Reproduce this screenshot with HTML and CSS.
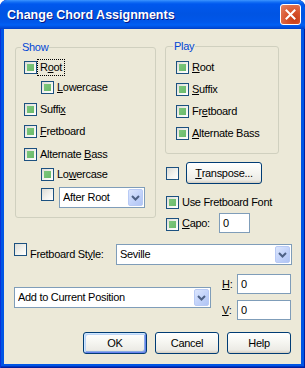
FILE: index.html
```
<!DOCTYPE html>
<html>
<head>
<meta charset="utf-8">
<link rel="stylesheet" href="styles.css">
</head>
<body>
<div class="window">
  <div class="titlebar">
    <span class="title">Change Chord Assignments</span>
    <span class="close"><svg width="11" height="11" viewBox="0 0 11 11"><path d="M1.5 1.5 L9.5 9.5 M9.5 1.5 L1.5 9.5" stroke="#fff" stroke-width="2" fill="none" stroke-linecap="square"/></svg></span>
  </div>
  <div class="client">
    <div class="top">
      <div class="group show">
        <div class="legend">Show</div>
        <div class="row m7"><span class="cb ind"></span><span class="lbl focus">R<u>o</u>ot</span></div>
        <div class="row m7 ind1"><span class="cb ind"></span><span class="lbl"><u>L</u>owercase</span></div>
        <div class="row m9"><span class="cb ind"></span><span class="lbl">Suffi<u>x</u></span></div>
        <div class="row m9"><span class="cb ind"></span><span class="lbl"><u>F</u>retboard</span></div>
        <div class="row m10"><span class="cb ind"></span><span class="lbl">Alternate <u>B</u>ass</span></div>
        <div class="row m7 ind1"><span class="cb ind"></span><span class="lbl">Lo<u>w</u>ercase</span></div>
        <div class="comborow ind1"><span class="cb"></span><div class="combo w86"><span class="ctext">After Root</span><span class="drop"><svg width="9" height="6" viewBox="0 0 9 6"><path d="M1 1 L4.5 4.5 L8 1" stroke="#4D6185" stroke-width="2" fill="none"/></svg></span></div></div>
      </div>
      <div class="right">
        <div class="group play">
          <div class="legend">Play</div>
          <div class="row m8"><span class="cb ind"></span><span class="lbl"><u>R</u>oot</span></div>
          <div class="row m9"><span class="cb ind"></span><span class="lbl"><u>S</u>uffix</span></div>
          <div class="row m9"><span class="cb ind"></span><span class="lbl">Fr<u>e</u>tboard</span></div>
          <div class="row m9"><span class="cb ind"></span><span class="lbl"><u>A</u>lternate Bass</span></div>
        </div>
        <div class="trow"><span class="cb"></span><span class="btn transpose"><u>T</u>ranspose...</span></div>
        <div class="row fontrow"><span class="cb ind"></span><span class="lbl">Use Fretboard Font</span></div>
        <div class="caporow"><span class="cb ind capocb"></span><span class="lbl capolbl"><u>C</u>apo:</span><span class="edit w31">0</span></div>
      </div>
    </div>
    <div class="fsrow">
      <span class="cb"></span>
      <span class="lbl fslbl">Fretboard St<u>y</u>le:</span>
      <div class="combo w176"><span class="ctext">Seville</span><span class="drop"><svg width="9" height="6" viewBox="0 0 9 6"><path d="M1 1 L4.5 4.5 L8 1" stroke="#4D6185" stroke-width="2" fill="none"/></svg></span></div>
    </div>
    <div class="bottom">
      <div class="combo w197 poscombo"><span class="ctext">Add to Current Position</span><span class="drop"><svg width="9" height="6" viewBox="0 0 9 6"><path d="M1 1 L4.5 4.5 L8 1" stroke="#4D6185" stroke-width="2" fill="none"/></svg></span></div>
      <div class="hv">
        <div class="hvrow"><span class="hvlbl"><u>H</u>:</span><span class="edit w54">0</span></div>
        <div class="hvrow vrow"><span class="hvlbl"><u>V</u>:</span><span class="edit w54">0</span></div>
      </div>
    </div>
    <div class="buttons">
      <span class="btn dlg default">OK</span>
      <span class="btn dlg">Cancel</span>
      <span class="btn dlg">Help</span>
    </div>
  </div>
</div>
</body>
</html>
```
FILE: styles.css
```
html, body {
  margin: 0;
  padding: 0;
  background: #ffffff;
}
body {
  font-family: "Liberation Sans", Arial, sans-serif;
  font-size: 11px;
  letter-spacing: -0.3px;
  color: #000;
}
.window {
  width: 305px;
  height: 368px;
  display: flex;
  flex-direction: column;
  background: #0055E5;
  border-radius: 7px 7px 0 0;
  box-shadow: inset 1px 0 #0831D9, inset -1px 0 #001EA0, inset 0 -1px #001EA0, inset 0 -2px #0036C0;
  overflow: hidden;
}
.titlebar {
  height: 29px;
  flex: none;
  box-sizing: border-box;
  display: flex;
  align-items: center;
  padding: 0 4px 0 7px;
  border-radius: 7px 7px 0 0;
  background: linear-gradient(to bottom, #3D95FF 0px, #1470F5 2px, #0058EE 4px, #0054E3 14px, #0057EA 22px, #0060F4 25px, #0049D6 28px, #003FC4 29px);
}
.title {
  color: #fff;
  font-weight: bold;
  font-size: 12.5px;
  letter-spacing: 0;
  text-shadow: 1px 1px #0A1883;
}
.close {
  margin-left: auto;
  width: 21px;
  height: 21px;
  box-sizing: border-box;
  border: 1px solid #fff;
  border-radius: 3px;
  background: radial-gradient(circle at 70% 75%, #C43C16 0%, #D8532C 40%, #E58566 100%);
  display: flex;
  align-items: center;
  justify-content: center;
}
.close svg { display: block; }
.client {
  flex: 1;
  margin: 0 4px 4px 4px;
  background: #ECE9D8;
  padding: 0 9px 0 10px;
  display: flex;
  flex-direction: column;
}
.top {
  display: flex;
  align-items: flex-start;
  margin-top: 17px;
}
.group {
  box-sizing: border-box;
  border: 1px solid #D0D0BF;
  border-radius: 3px;
  display: flex;
  flex-direction: column;
}
.show {
  width: 141px;
  height: 171px;
  margin: 1px 0 0 1px;
  padding-left: 8px;
}
.play {
  width: 114px;
  height: 108px;
  padding-left: 10px;
}
.legend {
  align-self: flex-start;
  margin: -7px 0 0 -3px;
  padding: 0 1px;
  background: #ECE9D8;
  color: #0046D5;
  line-height: 13px;
}
.right {
  display: flex;
  flex-direction: column;
  margin-left: 9px;
}
.row {
  display: flex;
  align-items: center;
  height: 13px;
  line-height: 13px;
  gap: 3px;
  white-space: nowrap;
}
.m7 { margin-top: 7px; }
.m8 { margin-top: 8px; }
.m9 { margin-top: 9px; }
.m10 { margin-top: 10px; }
.ind1 { margin-left: 17px; }
.cb {
  flex: none;
  width: 13px;
  height: 13px;
  box-sizing: border-box;
  border: 1px solid #1C5180;
  padding: 2px;
  background: linear-gradient(135deg, #DCDCD6 0%, #F4F4F0 60%, #FFFFFF 100%);
}
.cb.ind::after {
  content: "";
  display: block;
  width: 7px;
  height: 7px;
  background: linear-gradient(135deg, #7CC77C, #6BBA6B);
}
.lbl { line-height: 13px; }
.focus {
  padding: 0 1px;
  margin-left: -1px;
  outline: 1px dotted #000;
  outline-offset: 1px;
}
u { text-decoration: underline; text-underline-offset: 1px; }
.comborow {
  display: flex;
  align-items: flex-start;
  margin-top: 6px;
  gap: 5px;
}
.comborow .cb { margin-top: 1px; }
.combo {
  box-sizing: border-box;
  height: 21px;
  border: 1px solid #7F9DB9;
  background: #fff;
  display: flex;
  align-items: stretch;
  padding: 1px 1px 1px 3px;
  white-space: nowrap;
}
.ctext {
  flex: 1;
  line-height: 17px;
  overflow: hidden;
}
.drop {
  flex: none;
  width: 15px;
  box-sizing: border-box;
  border: 1px solid #B8CAF5;
  border-radius: 2px;
  background: linear-gradient(135deg, #DCE6FD 0%, #C4D4FA 50%, #B0C4F4 100%);
  display: flex;
  align-items: center;
  justify-content: center;
}
.drop svg { display: block; }
.w86 { width: 86px; }
.w176 { width: 176px; }
.w197 { width: 197px; }
.w31 { width: 31px; }
.w54 { width: 54px; }
.btn {
  box-sizing: border-box;
  height: 22px;
  border: 1px solid #003C74;
  border-radius: 3px;
  background: linear-gradient(to bottom, #FFFFFF 0%, #F7F7F3 40%, #ECEBE5 85%, #D6D0C5 100%);
  display: flex;
  align-items: center;
  justify-content: center;
  white-space: nowrap;
  box-shadow: inset 0 -1px #D8D2C6;
}
.transpose { width: 76px; }
.trow {
  display: flex;
  align-items: center;
  margin-top: 8px;
  margin-left: 1px;
  gap: 7px;
}
.fontrow {
  margin-top: 12px;
  margin-left: 1px;
}
.caporow {
  display: flex;
  align-items: center;
  margin-top: 4px;
  margin-left: 1px;
}
.capocb { margin-top: 3px; }
.capolbl {
  width: 37px;
  margin-left: 3px;
}
.edit {
  box-sizing: border-box;
  height: 20px;
  border: 1px solid #7F9DB9;
  background: #fff;
  padding-left: 3px;
  line-height: 18px;
}
.fsrow {
  display: flex;
  align-items: flex-start;
  margin-top: 10px;
}
.fslbl {
  margin: 5px 0 0 3px;
}
.fsrow .combo {
  margin-left: auto;
  margin-top: 1px;
}
.bottom {
  display: flex;
  align-items: flex-start;
  margin-top: 9px;
}
.poscombo { margin-top: 13px; }
.hv {
  margin-left: 11px;
  display: flex;
  flex-direction: column;
}
.hvrow {
  display: flex;
  align-items: center;
}
.vrow { margin-top: 6px; }
.hvlbl { width: 15px; }
.buttons {
  display: flex;
  justify-content: flex-end;
  gap: 8px;
  margin-top: 12px;
  margin-right: 1px;
}
.dlg { width: 64px; }
.default {
  box-shadow: inset 1px 1px 0 #CEE7FF, inset -1px -1px 0 #6982EE, inset 2px 2px 0 #BCD4F6, inset -2px -2px 0 #89ADE4;
}
```
